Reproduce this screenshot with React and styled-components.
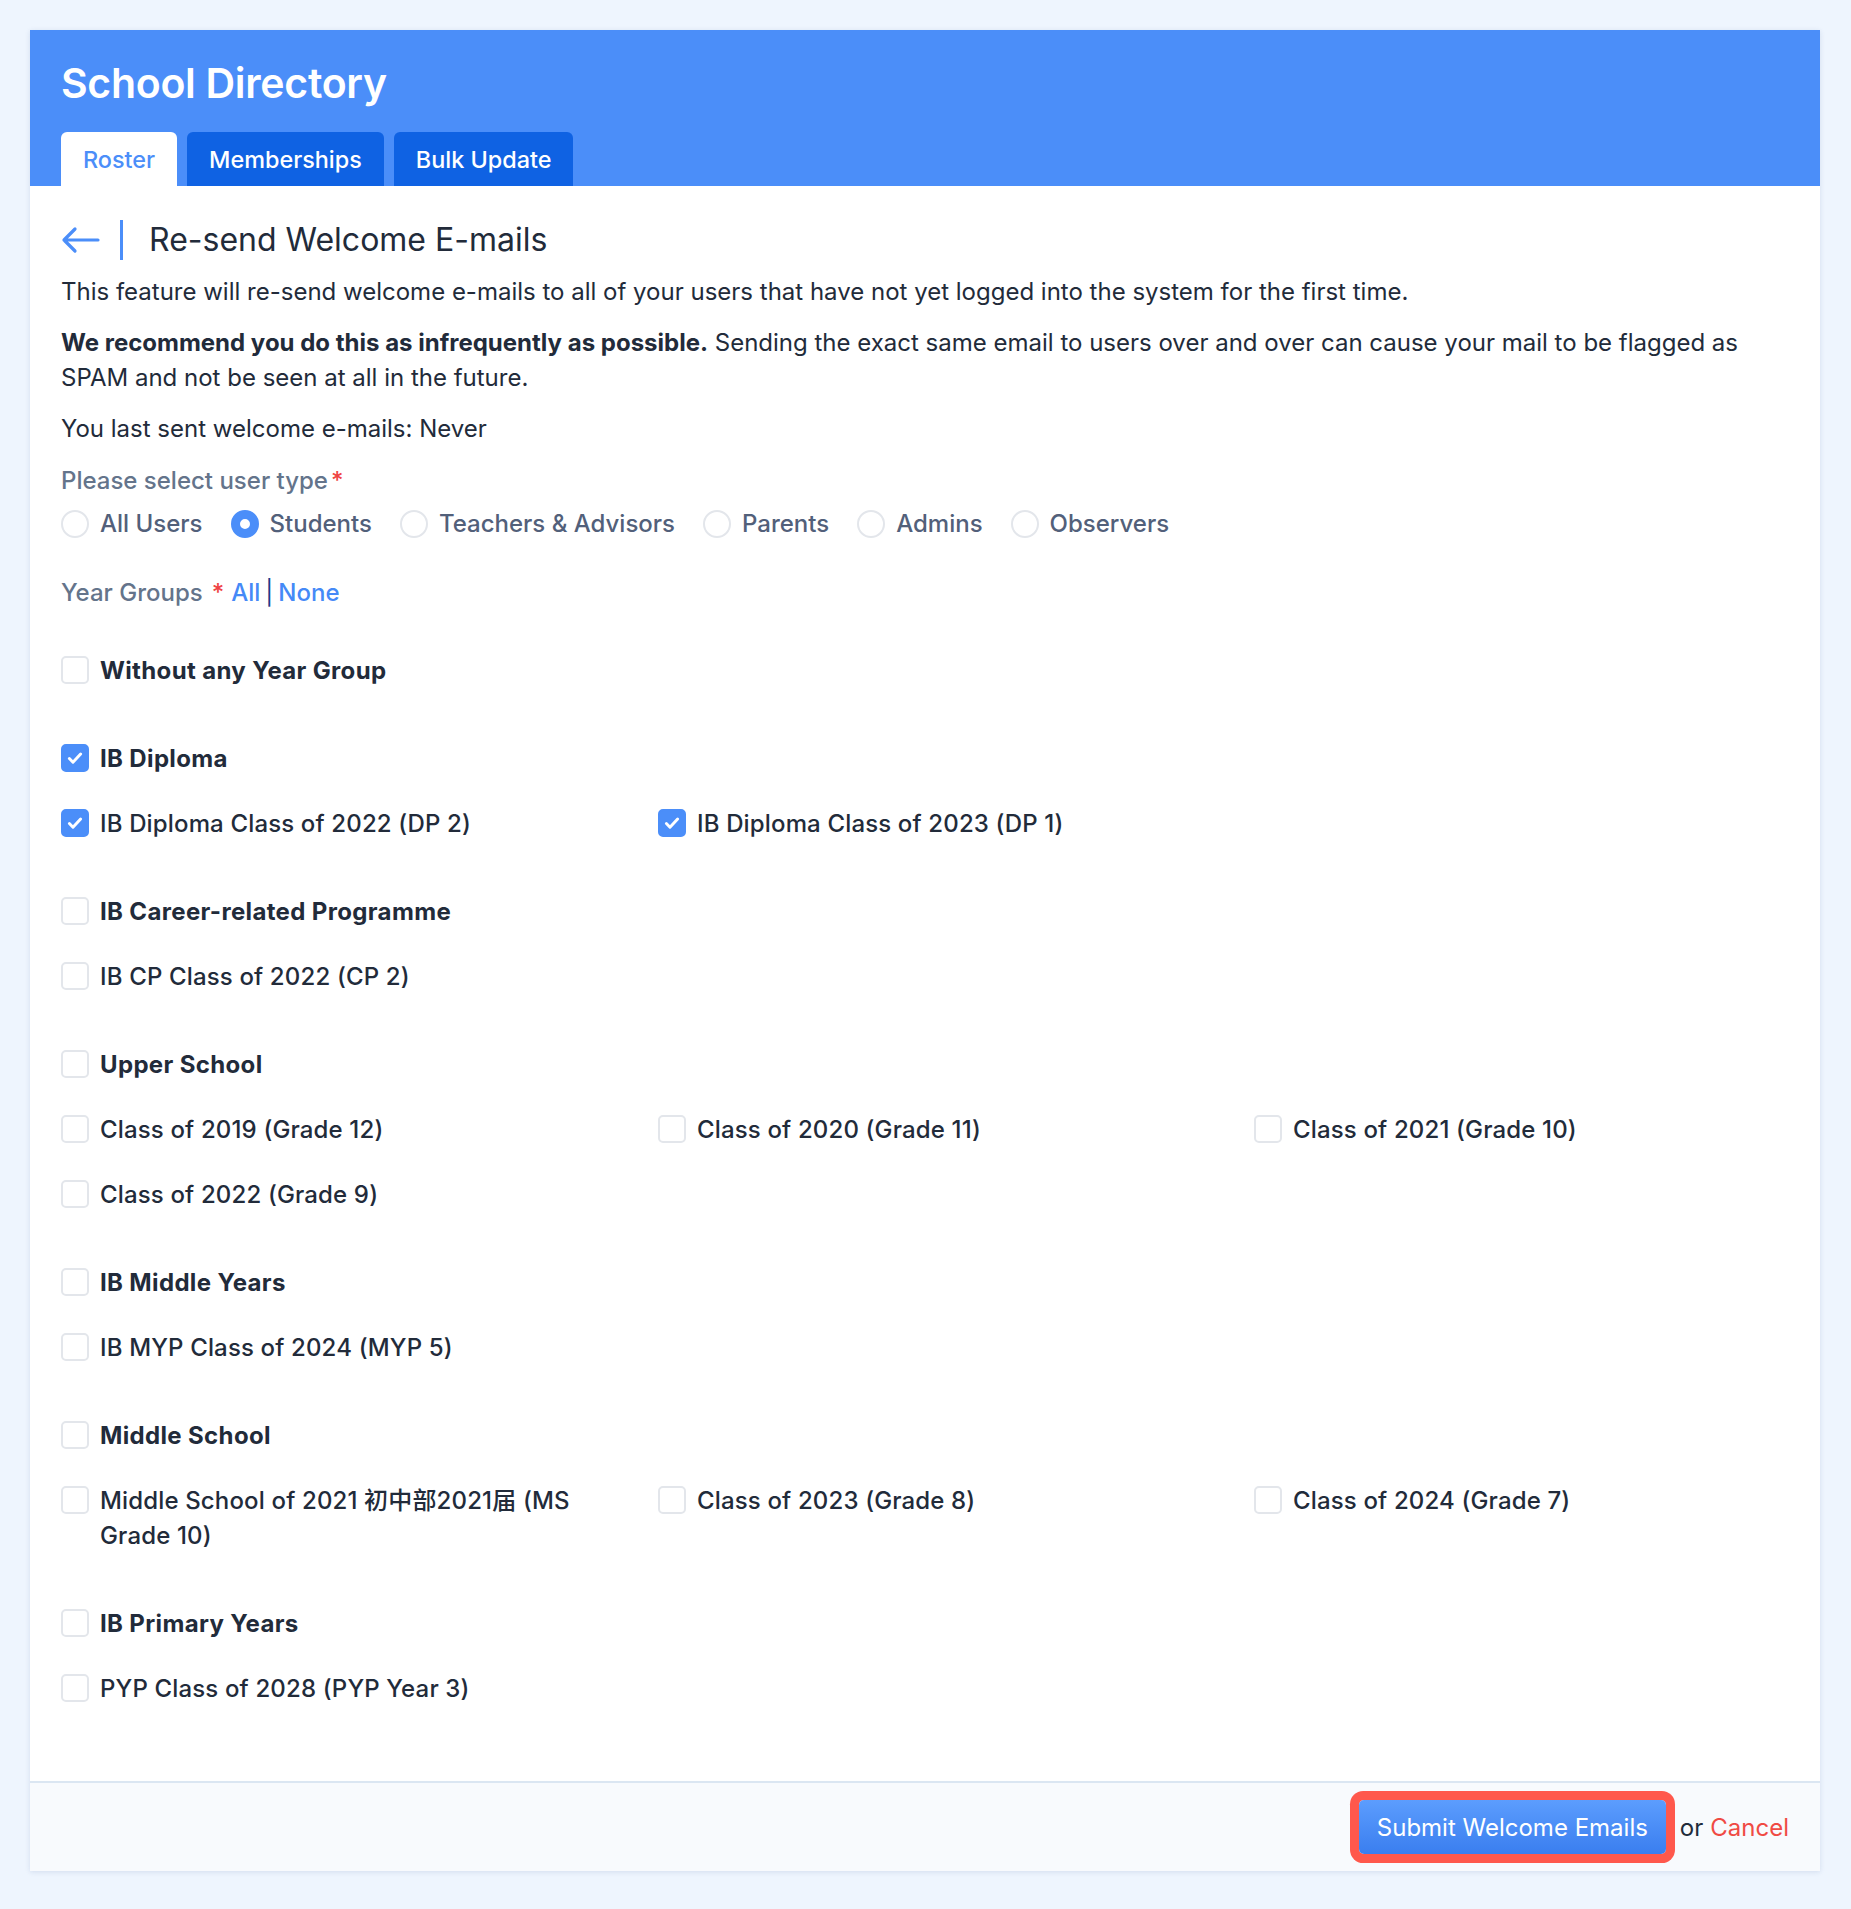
import React from 'react';
import styled, { createGlobalStyle } from 'styled-components';

const GlobalStyle = createGlobalStyle`
  html, body {
    margin: 0;
    padding: 0;
    background: #eef5fe;
  }
  body {
    font-family: Inter, "Noto Sans CJK SC", sans-serif;
    color: #1f2937;
  }
`;

const Page = styled.div`
  padding: 30px 31px 37px 30px;
`;

const Card = styled.div`
  background: #fff;
  box-shadow: 0 1px 5px rgba(40, 80, 140, 0.14);
`;

const Header = styled.div`
  background: #4b8ef9;
  padding: 25px 31px 0;
`;

const HeaderTitle = styled.h1`
  margin: 0 0 21px;
  color: #fff;
  font-size: 41px;
  font-weight: 600;
  line-height: 56px;
  letter-spacing: -0.3px;
`;

const Tabs = styled.div`
  display: flex;
  gap: 10px;
`;

const Tab = styled.div`
  height: 54px;
  padding: 0 22px;
  display: flex;
  align-items: center;
  border-radius: 6px 6px 0 0;
  font-size: 23.4px;
  font-weight: 500;
  background: ${p => (p.active ? '#fff' : '#0f62e3')};
  color: ${p => (p.active ? '#4b8ef9' : '#fff')};
`;

const Content = styled.div`
  padding: 34px 31px 75px;
  font-size: 24px;
  line-height: 35px;
`;

const TitleRow = styled.div`
  display: flex;
  align-items: center;
  height: 40px;
`;

const Divider = styled.span`
  width: 3px;
  height: 40px;
  background: #4b8ef9;
  margin-left: 20px;
`;

const PageTitle = styled.h2`
  margin: 0 0 0 26px;
  font-size: 32px;
  line-height: 40px;
  font-weight: 400;
  color: #222b3a;
`;

const Para = styled.p`
  margin: ${p => p.gap || 16}px 0 0;
  color: #222b3a;
  b {
    font-weight: 700;
  }
`;

const FieldLabel = styled.div`
  margin-top: ${p => p.gap}px;
  color: #64748b;
  font-weight: 500;
  display: flex;
  align-items: center;
`;

const Required = styled.span`
  color: #ef4444;
  margin-left: ${p => p.gap || 3}px;
`;

const LinkText = styled.span`
  color: #4589f7;
  margin-left: ${p => p.gap || 0}px;
`;

const Pipe = styled.span`
  color: #1e3a8a;
  font-weight: 400;
  margin: 0 5px;
`;

const RadioRow = styled.div`
  margin-top: 8px;
  display: flex;
  gap: 28px;
`;

const RadioItem = styled.label`
  display: flex;
  align-items: center;
  gap: 11px;
  color: #52607a;
  font-weight: 500;
`;

const Radio = styled.span`
  width: 28px;
  height: 28px;
  box-sizing: border-box;
  border-radius: 50%;
  border: ${p => (p.checked ? '9px solid #4b8ef9' : '2px solid #e3e6eb')};
  background: #fff;
`;

const Groups = styled.div`
  margin-top: 43px;
  display: flex;
  flex-direction: column;
  gap: 53px;
`;

const Group = styled.div`
  display: flex;
  flex-direction: column;
  gap: 30px;
`;

const Grid = styled.div`
  display: grid;
  grid-template-columns: 597px 596px 1fr;
  row-gap: 30px;
`;

const CheckItem = styled.label`
  display: flex;
  align-items: flex-start;
  gap: 11px;
  color: #222b3a;
  font-weight: ${p => (p.bold ? 700 : 500)};
  letter-spacing: ${p => (p.bold ? '0.35px' : '0.15px')};
`;

const Box = styled.span`
  flex: none;
  width: 28px;
  height: 28px;
  margin-top: 3px;
  box-sizing: border-box;
  border-radius: 5px;
  border: 2px solid ${p => (p.checked ? '#4b8ef9' : '#e3e6eb')};
  background: ${p => (p.checked ? '#4b8ef9' : '#fff')};
  display: flex;
  align-items: center;
  justify-content: center;
`;

const ItemText = styled.span`
  max-width: 500px;
`;

const Footer = styled.div`
  border-top: 2px solid #dbe6f2;
  background: #f8fafd;
  height: 88px;
  padding: 0 31px;
  display: flex;
  justify-content: flex-end;
  align-items: center;
  font-size: 24px;
`;

const SubmitButton = styled.button`
  height: 54px;
  padding: 0 18px;
  border: none;
  border-radius: 5px;
  background: linear-gradient(#5c9dfe, #3a7eef);
  color: #fff;
  font-family: inherit;
  font-size: 24px;
  box-shadow: 0 0 0 9px #ff584c;
  cursor: pointer;
`;

const Or = styled.span`
  margin-left: 14px;
  color: #222b3a;
`;

const Cancel = styled.span`
  margin-left: 7px;
  color: #f04a44;
`;

function Check({ checked }) {
  return (
    <Box checked={checked}>
      {checked && (
        <svg width="18" height="18" viewBox="0 0 16 16">
          <path d="M3 8.5l3.2 3.2L13 4.5" fill="none" stroke="#fff" strokeWidth="2.6" strokeLinecap="round" strokeLinejoin="round" />
        </svg>
      )}
    </Box>
  );
}

function Item({ label, checked, bold }) {
  return (
    <CheckItem bold={bold}>
      <Check checked={checked} />
      <ItemText>{label}</ItemText>
    </CheckItem>
  );
}

const groups = [
  { name: 'Without any Year Group', items: [] },
  {
    name: 'IB Diploma',
    checked: true,
    items: [
      { label: 'IB Diploma Class of 2022 (DP 2)', checked: true },
      { label: 'IB Diploma Class of 2023 (DP 1)', checked: true },
    ],
  },
  { name: 'IB Career-related Programme', items: [{ label: 'IB CP Class of 2022 (CP 2)' }] },
  {
    name: 'Upper School',
    items: [
      { label: 'Class of 2019 (Grade 12)' },
      { label: 'Class of 2020 (Grade 11)' },
      { label: 'Class of 2021 (Grade 10)' },
      { label: 'Class of 2022 (Grade 9)' },
    ],
  },
  { name: 'IB Middle Years', items: [{ label: 'IB MYP Class of 2024 (MYP 5)' }] },
  {
    name: 'Middle School',
    items: [
      { label: 'Middle School of 2021 初中部2021届 (MS Grade 10)' },
      { label: 'Class of 2023 (Grade 8)' },
      { label: 'Class of 2024 (Grade 7)' },
    ],
  },
  { name: 'IB Primary Years', items: [{ label: 'PYP Class of 2028 (PYP Year 3)' }] },
];

const userTypes = ['All Users', 'Students', 'Teachers & Advisors', 'Parents', 'Admins', 'Observers'];

export default function App() {
  return (
    <>
      <GlobalStyle />
      <Page>
        <Card>
          <Header>
            <HeaderTitle>School Directory</HeaderTitle>
            <Tabs>
              <Tab active>Roster</Tab>
              <Tab>Memberships</Tab>
              <Tab>Bulk Update</Tab>
            </Tabs>
          </Header>

          <Content>
            <TitleRow>
              <svg width="39" height="28" viewBox="0 0 39 28">
                <path d="M37 14H3M14 3L3 14l11 11" fill="none" stroke="#4b8ef9" strokeWidth="3.2" strokeLinecap="round" strokeLinejoin="round" />
              </svg>
              <Divider />
              <PageTitle>Re-send Welcome E-mails</PageTitle>
            </TitleRow>

            <Para gap={14}>
              This feature will re-send welcome e-mails to all of your users that have not yet logged into the system for the first time.
            </Para>
            <Para>
              <b>We recommend you do this as infrequently as possible.</b> Sending the exact same email to users over and over can cause your mail to be flagged as SPAM and not be seen at all in the future.
            </Para>
            <Para>You last sent welcome e-mails: Never</Para>

            <FieldLabel gap={17}>
              Please select user type<Required>*</Required>
            </FieldLabel>
            <RadioRow>
              {userTypes.map(t => (
                <RadioItem key={t}>
                  <Radio checked={t === 'Students'} />
                  {t}
                </RadioItem>
              ))}
            </RadioRow>

            <FieldLabel gap={34}>
              Year Groups<Required gap={9}>*</Required>
              <LinkText gap={7}>All</LinkText>
              <Pipe>|</Pipe>
              <LinkText>None</LinkText>
            </FieldLabel>

            <Groups>
              {groups.map(g => (
                <Group key={g.name}>
                  <Item label={g.name} checked={g.checked} bold />
                  {g.items.length > 0 && (
                    <Grid>
                      {g.items.map(it => (
                        <Item key={it.label} label={it.label} checked={it.checked} />
                      ))}
                    </Grid>
                  )}
                </Group>
              ))}
            </Groups>
          </Content>

          <Footer>
            <SubmitButton>Submit Welcome Emails</SubmitButton>
            <Or>or</Or>
            <Cancel>Cancel</Cancel>
          </Footer>
        </Card>
      </Page>
    </>
  );
}
